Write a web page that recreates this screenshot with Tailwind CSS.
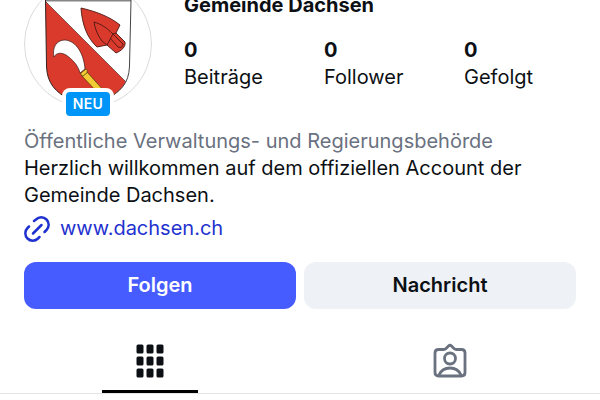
<!DOCTYPE html>
<html lang="de">
<head>
    <meta charset="UTF-8">
    <meta name="viewport" content="width=device-width, initial-scale=1.0">
    <title>Gemeinde Dachsen</title>
    <!-- Tailwind CSS CDN -->
    <script src="https://cdn.jsdelivr.net/npm/@tailwindcss/browser@4"></script>
</head>
<body class="bg-white font-['Inter','Liberation_Sans',sans-serif] text-xl leading-[27px] text-[#0c1014]">
    <main class="overflow-hidden">
        <!-- Profile header, scrolled slightly past the top -->
        <header class="-mt-5 flex gap-8 px-6">
            <div class="relative size-32 shrink-0">
                <svg class="size-32" viewBox="24 -20 128 128" role="img" aria-label="Wappen Dachsen">
                    <defs>
                        <clipPath id="shield">
                            <path d="M45.500 0H131L129.500 66C129 84 120 92 105 100L88 107L70 100C56 92 47 84 46.500 66Z"/>
                        </clipPath>
                    </defs>
                    <circle cx="88" cy="44" r="63.500" fill="#fff" stroke="#dbdbdb"/>
                    <g clip-path="url(#shield)">
                        <path d="M45 1L134 90V110H45Z" fill="#d93a2b" stroke="#3a1a18" stroke-width=".6"/>
                        <path d="M45 .5H131" stroke="#858585" stroke-width="2"/>
                    </g>
                    <path d="M45.500 0L46.500 66C47 84 56 92 70 100L88 107" fill="none" stroke="#33201f"/>
                    <path d="M131 0L129.500 66C129 84 120 92 105 100L88 107" fill="none" stroke="#444"/>
                    <!-- Sickle -->
                    <path d="M54 57C52 48 56 40 65 40C77 41 84 55 85 69L80 73C78 65 72 59 66 55C61 52 56 53 54 57Z" fill="#fff" stroke="#3a1a18" stroke-width=".7"/>
                    <path d="M87 72L105 92L98 93L82 76Z" fill="#f2cb35" stroke="#4a3510" stroke-width=".7"/>
                    <path d="M81 73L86 69Q88 70 87 73L83 76Q80 76 81 73Z" fill="#f2cb35" stroke="#4a3510" stroke-width=".7"/>
                    <!-- Ploughshare -->
                    <path d="M81 8C94 11 109 16 120 25L116 33L125 42C126 47 121 51 116 53L107 45L97 47C87 38 82 24 81 8Z" fill="#d93a2b" stroke="#4b1714" stroke-width=".9" stroke-linejoin="round"/>
                    <path d="M107 45L102 41C98 36 95 29 94 22C101 24 107 28 113 34L107 45M113 34L123 44M110 38L118 47M113 34L116 33M118 47C121 48 123 47 123 44" fill="none" stroke="#4b1714" stroke-width=".9"/>
                </svg>
                <span class="absolute -bottom-2 left-1/2 flex h-6 w-11 -translate-x-1/2 items-center justify-center rounded-sm bg-[#0095f6] text-sm font-semibold tracking-wide text-white ring-4 ring-white">NEU</span>
            </div>
            <div class="min-w-0 flex-1 pt-3">
                <h1 class="font-bold">Gemeinde Dachsen</h1>
                <ul class="mt-[18px] grid grid-cols-[140px_140px_1fr]">
                    <li><strong class="block font-bold">0</strong>Beiträge</li>
                    <li><strong class="block font-bold">0</strong>Follower</li>
                    <li><strong class="block font-bold">0</strong>Gefolgt</li>
                </ul>
            </div>
        </header>

        <!-- Bio -->
        <section class="px-6 pt-5">
            <p class="text-[#6a717f]">Öffentliche Verwaltungs- und Regierungsbehörde</p>
            <p>Herzlich willkommen auf dem offiziellen Account der<br>Gemeinde Dachsen.</p>
            <a href="#" class="mt-1.5 flex w-fit items-center gap-2.5 text-[#1f32cf]">
                <svg class="size-[26px]" viewBox="0 0 26 26" fill="none" stroke="currentColor" stroke-width="2.500" stroke-linecap="round">
                    <path d="M9 17.500L17.500 9"/>
                    <path d="M10 5L12 3.500A7.300 7.300 0 0 1 22.500 14L20.500 16"/>
                    <path d="M5 10.500L3.500 12A7.300 7.300 0 0 0 14 22.500L15.500 21"/>
                </svg>
                www.dachsen.ch
            </a>
        </section>

        <!-- Actions -->
        <div class="mt-5 grid grid-cols-2 gap-2 px-6">
            <button type="button" class="h-[47px] rounded-xl bg-[#465cff] font-semibold text-white">Folgen</button>
            <button type="button" class="h-[47px] rounded-xl bg-[#eef1f5] font-semibold">Nachricht</button>
        </div>

        <!-- Tabs -->
        <nav class="mt-5 grid grid-cols-2 border-b border-[#e4e5e7]">
            <button type="button" aria-label="Beiträge" class="mx-auto flex h-16 w-24 items-center justify-center border-b-3 border-black pt-0.5">
                <svg class="size-9" viewBox="0 0 36 36">
                    <g fill="#0c1014">
                        <rect x="4.500" y="1.500" width="7" height="9" rx="1.500"/>
                        <rect x="14.500" y="1.500" width="7" height="9" rx="1.500"/>
                        <rect x="24.500" y="1.500" width="7" height="9" rx="1.500"/>
                        <rect x="4.500" y="13.500" width="7" height="9" rx="1.500"/>
                        <rect x="14.500" y="13.500" width="7" height="9" rx="1.500"/>
                        <rect x="24.500" y="13.500" width="7" height="9" rx="1.500"/>
                        <rect x="4.500" y="25.500" width="7" height="9" rx="1.500"/>
                        <rect x="14.500" y="25.500" width="7" height="9" rx="1.500"/>
                        <rect x="24.500" y="25.500" width="7" height="9" rx="1.500"/>
                    </g>
                </svg>
            </button>
            <button type="button" aria-label="Markiert" class="mx-auto flex h-16 w-24 items-center justify-center border-b-3 border-transparent pt-0.5">
                <svg class="size-9" viewBox="0 0 36 36" fill="none" stroke="#6a717f" stroke-width="2.800" stroke-linecap="round" stroke-linejoin="round">
                    <path d="M6.500 6.500H11.500Q13 6.500 14 5.500L16.500 3Q18 1.500 19.500 3L22 5.500Q23 6.500 24.500 6.500H29.500Q33 6.500 33 10V29.500Q33 33 29.500 33H6.500Q3 33 3 29.500V10Q3 6.500 6.500 6.500Z"/>
                    <circle cx="18" cy="15.500" r="5.500"/>
                    <path d="M7 32C9 27.500 13 25 18 25S27 27.500 29 32"/>
                </svg>
            </button>
        </nav>
    </main>
</body>
</html>
